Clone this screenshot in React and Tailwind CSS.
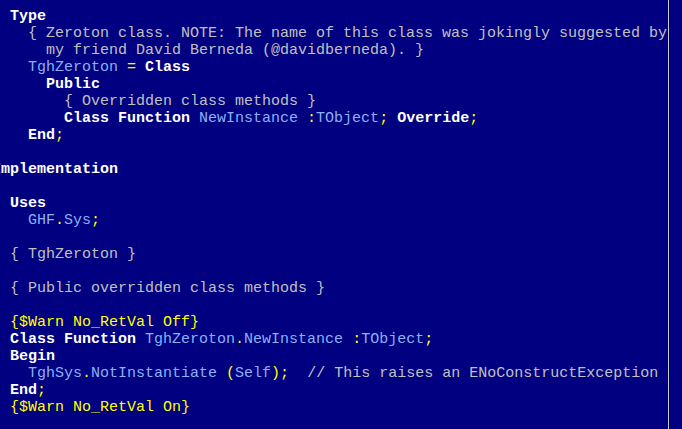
const K = ({ children }) => <span className="font-bold text-white">{children}</span>;
const C = ({ children }) => <span className="text-[#c0c0c0]">{children}</span>;
const I = ({ children }) => <span className="text-[#8cb0f6]">{children}</span>;
const Y = ({ children }) => <span className="text-[#ffff00]">{children}</span>;

const lines = [
  <>{"  "}<K>Type</K></>,
  <>{"    "}<C>{"{ Zeroton class. NOTE: The name of this class was jokingly suggested by"}</C></>,
  <>{"      "}<C>{"my friend David Berneda (@davidberneda). }"}</C></>,
  <>{"    "}<I>TghZeroton</I> <Y>=</Y> <K>Class</K></>,
  <>{"      "}<K>Public</K></>,
  <>{"        "}<C>{"{ Overridden class methods }"}</C></>,
  <>{"        "}<K>Class Function</K> <I>NewInstance </I><Y>:</Y><I>TObject</I><Y>;</Y> <K>Override</K><Y>;</Y></>,
  <>{"    "}<K>End</K><Y>;</Y></>,
  <>{" "}</>,
  <><K>Implementation</K></>,
  <>{" "}</>,
  <>{"  "}<K>Uses</K></>,
  <>{"    "}<I>GHF</I><Y>.</Y><I>Sys</I><Y>;</Y></>,
  <>{" "}</>,
  <>{"  "}<C>{"{ TghZeroton }"}</C></>,
  <>{" "}</>,
  <>{"  "}<C>{"{ Public overridden class methods }"}</C></>,
  <>{" "}</>,
  <>{"  "}<Y>{"{$Warn No_RetVal Off}"}</Y></>,
  <>{"  "}<K>Class Function</K> <I>TghZeroton</I><Y>.</Y><I>NewInstance </I><Y>:</Y><I>TObject</I><Y>;</Y></>,
  <>{"  "}<K>Begin</K></>,
  <>{"    "}<I>TghSys</I><Y>.</Y><I>NotInstantiate </I><Y>(</Y><I>Self</I><Y>);</Y><C>{"  // This raises an ENoConstructException"}</C></>,
  <>{"  "}<K>End</K><Y>;</Y></>,
  <>{"  "}<Y>{"{$Warn No_RetVal On}"}</Y></>,
];

export default function App() {
  return (
    <div className="flex h-[429px] w-[682px] overflow-hidden bg-[#000080]">
      <div className="h-full w-[669px] shrink-0 overflow-hidden border-r border-[#c8c8c8]">
        <div
          className="ml-[-8px] pt-[8px] text-[15px] leading-[17px] whitespace-pre"
          style={{ fontFamily: '"Courier New", "Liberation Mono", monospace' }}
        >
          {lines.map((l, i) => (
            <div key={i} className="h-[17px]">{l}</div>
          ))}
        </div>
      </div>
    </div>
  );
}
